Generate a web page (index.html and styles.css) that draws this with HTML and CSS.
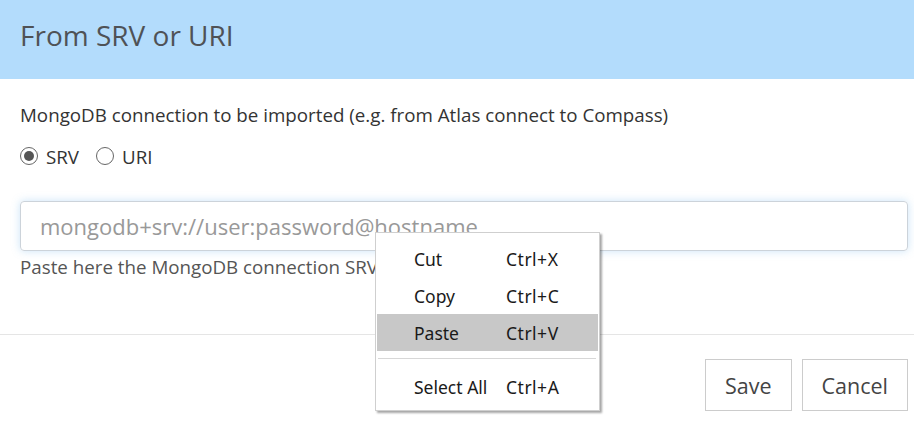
FILE: index.html
```html
<!DOCTYPE html>
<html>
<head>
<meta charset="utf-8">
<link rel="stylesheet" href="styles.css">
</head>
<body>
<div class="modal">
  <div class="modal-header"><h1 class="title">From SRV or URI</h1></div>
  <div class="modal-body">
    <div class="label">MongoDB connection to be imported (e.g. from Atlas connect to Compass)</div>
    <div class="radios">
      <label class="radio"><span class="dot checked"></span>SRV</label>
      <label class="radio"><span class="dot"></span>URI</label>
    </div>
    <div class="input">mongodb+srv://user:password@hostname</div>
    <div class="help">Paste here the MongoDB connection SRV</div>
  </div>
  <div class="modal-footer">
    <button class="btn">Save</button>
    <button class="btn">Cancel</button>
  </div>
</div>
<div class="menu">
  <div class="item"><span class="name">Cut</span><span class="key">Ctrl+X</span></div>
  <div class="item"><span class="name">Copy</span><span class="key">Ctrl+C</span></div>
  <div class="item active"><span class="name">Paste</span><span class="key">Ctrl+V</span></div>
  <div class="sep"></div>
  <div class="item"><span class="name">Select All</span><span class="key">Ctrl+A</span></div>
</div>
</body>
</html>
```
FILE: styles.css
```css
html, body { margin: 0; padding: 0; background: #fff; }
body { font-family: "Open Sans", "Noto Sans", sans-serif; color: #333; width: 914px; height: 432px; overflow: hidden; position: relative; }
.modal-header { background: #b3dcfc; height: 79px; box-sizing: border-box; padding: 16px 20px 0; }
.title { margin: 0; font-weight: 400; font-size: 28px; line-height: 38px; color: #4f5256; }
.modal-body { padding: 23px 6px 0 20px; }
.label { font-size: 18.75px; line-height: 26px; color: #333; }
.radios { display: flex; gap: 17px; margin-top: 15px; align-items: center; height: 26px; }
.radio { display: flex; align-items: center; font-size: 18.75px; color: #333; gap: 8px; }
.dot { width: 18px; height: 18px; border: 1.25px solid #666; border-radius: 50%; box-sizing: border-box; display: flex; align-items: center; justify-content: center; }
.dot.checked::after { content: ""; width: 10px; height: 10px; border-radius: 50%; background: #555; }
.input { margin-top: 32px; height: 50px; box-sizing: border-box; border: 1px solid #ccd3da; border-radius: 4px; box-shadow: 0 0 9px rgba(102,175,233,0.35); padding: 0 19px; display: flex; align-items: center; font-size: 22px; color: #999; }
.help { font-size: 18.75px; color: #555; margin-top: 3px; line-height: 26px; }
.modal-footer { margin-top: 54px; border-top: 1px solid #e5e5e5; display: flex; justify-content: flex-end; gap: 10px; padding: 24px 6px 0 0; }
.btn { font-family: inherit; font-size: 21.5px; color: #444; background: #fff; border: 1px solid #ccc; border-radius: 0; height: 52px; padding: 0 19px; }
.menu { position: absolute; left: 375px; top: 232px; width: 225px; box-sizing: border-box; background: #fff; border: 1px solid #cfcfcf; box-shadow: 2px 2px 2px rgba(0,0,0,0.35); padding: 7px 1px 5px; font-family: "Noto Sans", "Open Sans", sans-serif; font-size: 17.5px; color: #1a1a1a; }
.item { height: 37px; display: flex; align-items: center; padding-left: 37px; }
.item.active { background: #c8c8c8; }
.name { width: 92px; }
.key { color: #1a1a1a; letter-spacing: 0.5px; }
.sep { height: 17px; position: relative; }
.sep::after { content: ""; position: absolute; left: 1px; right: 2px; top: 7px; height: 1px; background: #d7d7d7; }
```
